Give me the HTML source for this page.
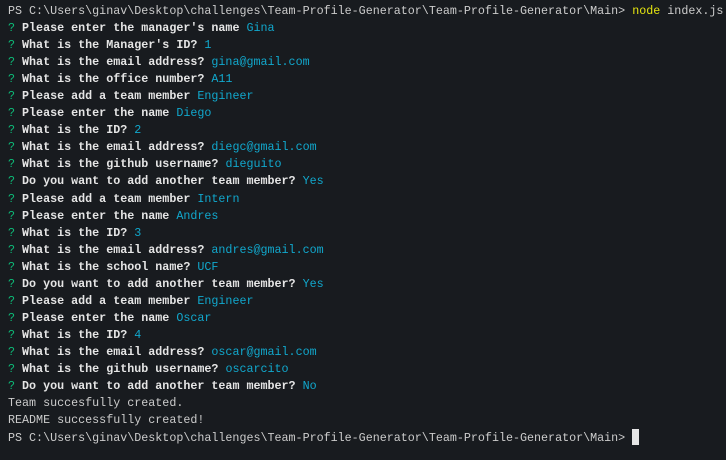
<!DOCTYPE html>
<html><head><style>
html,body{margin:0;padding:0;background:#181b1f;width:726px;height:460px;overflow:hidden}
pre{margin:0;padding:3px 0 0 8px;font-family:"Liberation Mono",monospace;font-size:11.7px;line-height:17.04px;color:#cccccc}
.g{color:#0dbc79}.c{color:#11a8cd}.y{color:#e5e510}b{font-weight:bold;color:#e5e5e5}
.cur{display:inline-block;width:7px;height:16px;background:#e5e5e5;vertical-align:-4px}
</style></head><body><pre>PS C:\Users\ginav\Desktop\challenges\Team-Profile-Generator\Team-Profile-Generator\Main&gt; <span class="y">node</span> index.js
<span class="g">?</span> <b>Please enter the manager's name</b> <span class="c">Gina</span>
<span class="g">?</span> <b>What is the Manager's ID?</b> <span class="c">1</span>
<span class="g">?</span> <b>What is the email address?</b> <span class="c">gina@gmail.com</span>
<span class="g">?</span> <b>What is the office number?</b> <span class="c">A11</span>
<span class="g">?</span> <b>Please add a team member</b> <span class="c">Engineer</span>
<span class="g">?</span> <b>Please enter the name</b> <span class="c">Diego</span>
<span class="g">?</span> <b>What is the ID?</b> <span class="c">2</span>
<span class="g">?</span> <b>What is the email address?</b> <span class="c">diegc@gmail.com</span>
<span class="g">?</span> <b>What is the github username?</b> <span class="c">dieguito</span>
<span class="g">?</span> <b>Do you want to add another team member?</b> <span class="c">Yes</span>
<span class="g">?</span> <b>Please add a team member</b> <span class="c">Intern</span>
<span class="g">?</span> <b>Please enter the name</b> <span class="c">Andres</span>
<span class="g">?</span> <b>What is the ID?</b> <span class="c">3</span>
<span class="g">?</span> <b>What is the email address?</b> <span class="c">andres@gmail.com</span>
<span class="g">?</span> <b>What is the school name?</b> <span class="c">UCF</span>
<span class="g">?</span> <b>Do you want to add another team member?</b> <span class="c">Yes</span>
<span class="g">?</span> <b>Please add a team member</b> <span class="c">Engineer</span>
<span class="g">?</span> <b>Please enter the name</b> <span class="c">Oscar</span>
<span class="g">?</span> <b>What is the ID?</b> <span class="c">4</span>
<span class="g">?</span> <b>What is the email address?</b> <span class="c">oscar@gmail.com</span>
<span class="g">?</span> <b>What is the github username?</b> <span class="c">oscarcito</span>
<span class="g">?</span> <b>Do you want to add another team member?</b> <span class="c">No</span>
Team succesfully created.
README successfully created!
PS C:\Users\ginav\Desktop\challenges\Team-Profile-Generator\Team-Profile-Generator\Main&gt; <span class="cur"></span></pre></body></html>
